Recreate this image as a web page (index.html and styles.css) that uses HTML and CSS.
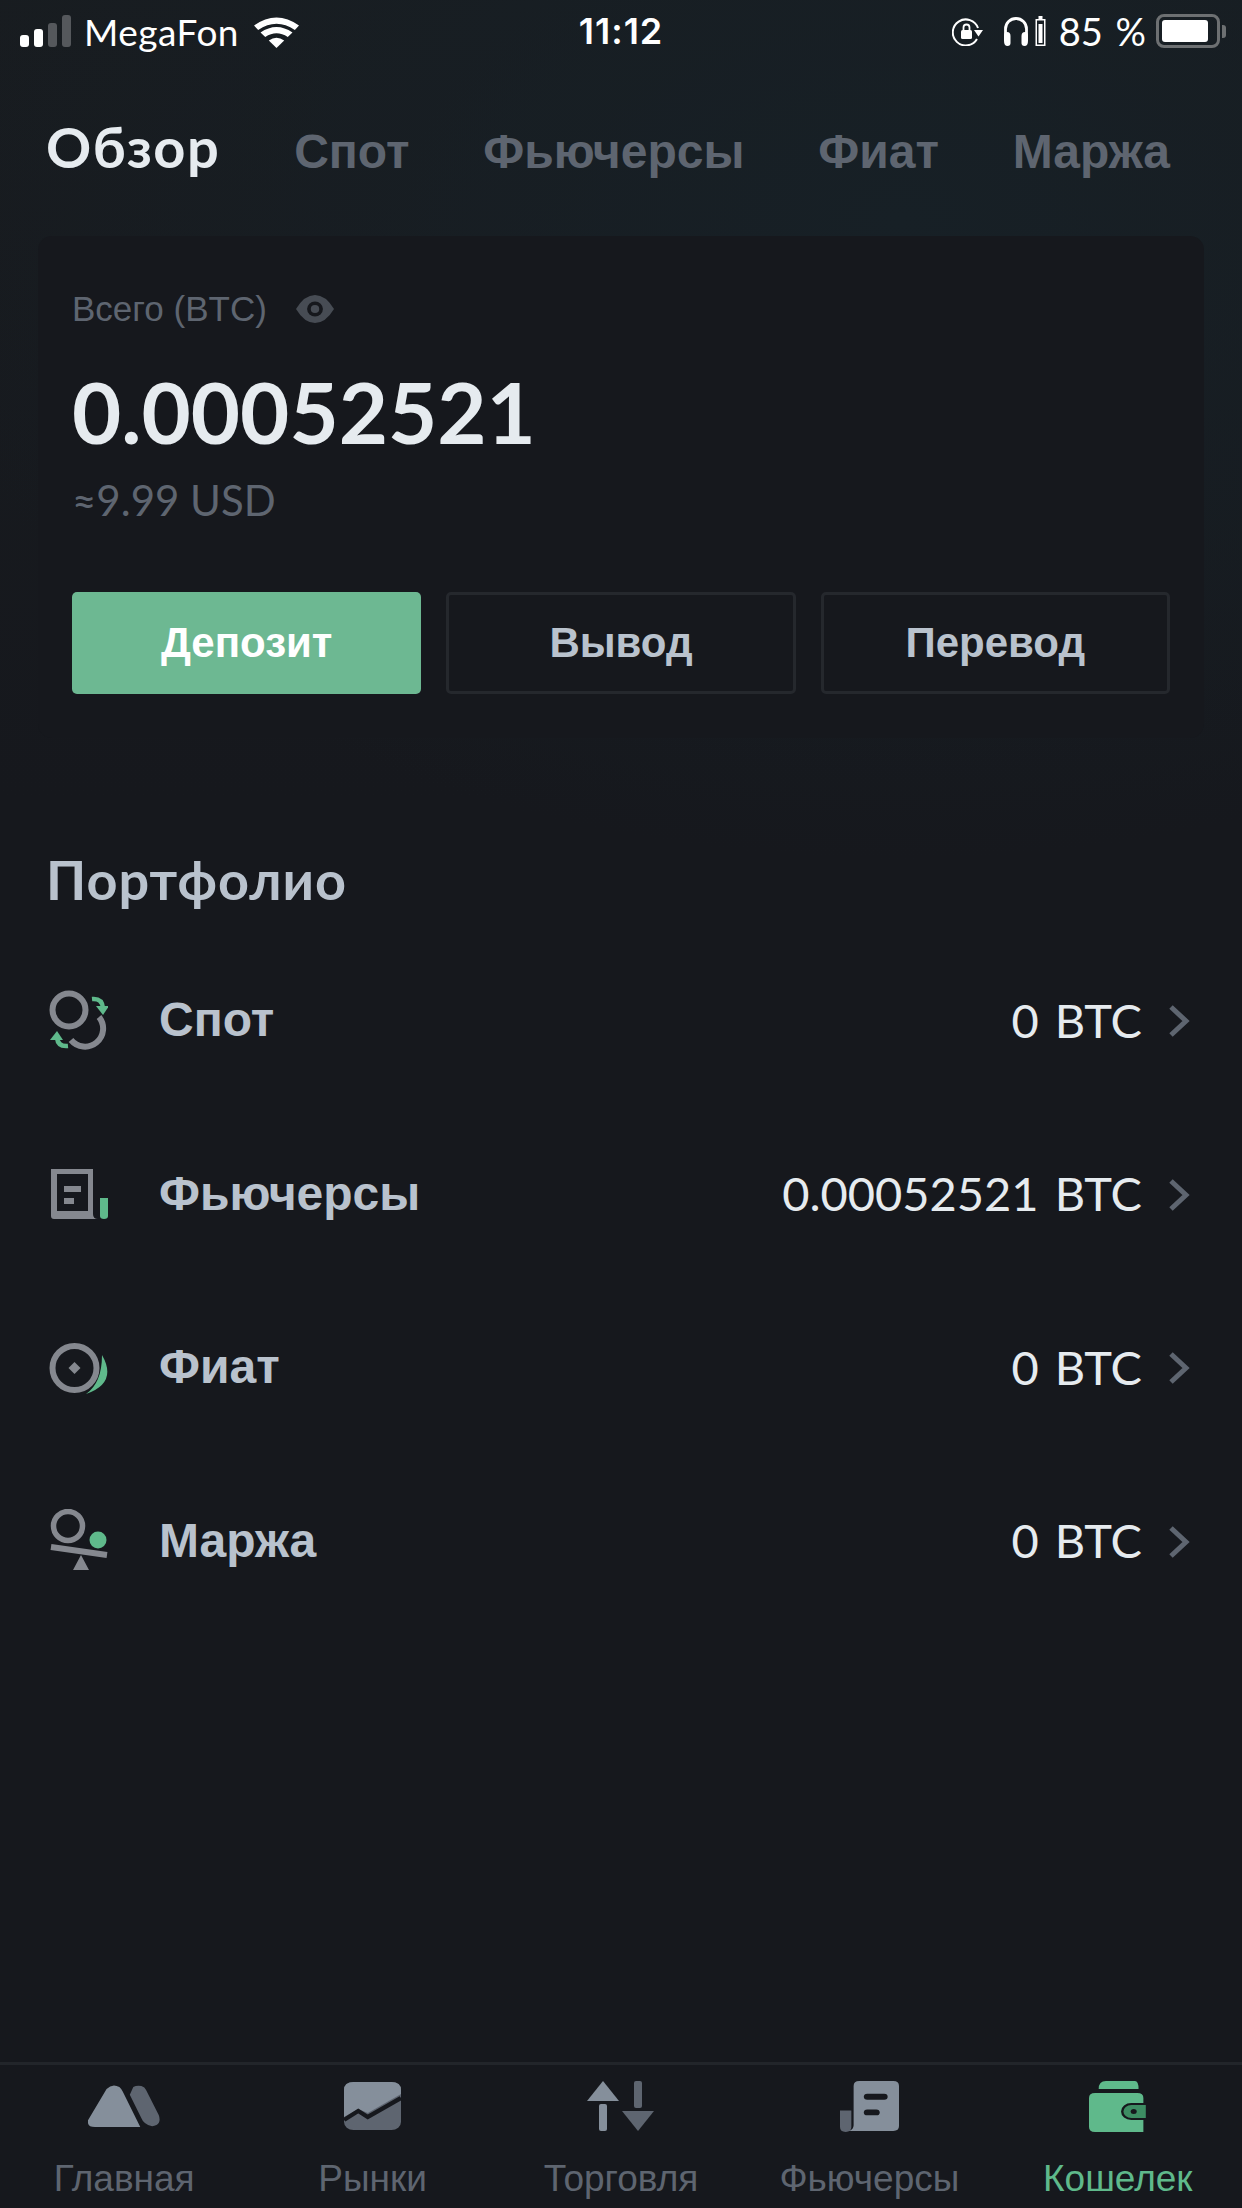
FILE: index.html
```html
<!DOCTYPE html>
<html lang="ru">
<head>
    <meta charset="UTF-8">
    <meta name="viewport" content="width=device-width, initial-scale=1.0">
    <title>Кошелек</title>
    <link rel="stylesheet" href="styles.css">
</head>
<body>
    <div class="status-bar">
        <div class="status-left">
            <div class="signal">
                <span class="bar bar-1"></span>
                <span class="bar bar-2"></span>
                <span class="bar bar-3 off"></span>
                <span class="bar bar-4 off"></span>
            </div>
            <span class="carrier">MegaFon</span>
            <svg class="wifi" width="45" height="33" viewBox="0 0 38 33" preserveAspectRatio="none">
                <path d="M19 33 L12.5 25.5 Q19 20 25.5 25.5 Z" fill="#fff"/>
                <path d="M9.5 22 L5.5 17.5 Q19 6.5 32.5 17.5 L28.5 22 Q19 14.5 9.5 22 Z" fill="#fff"/>
                <path d="M3.5 15 L0 10.5 Q19 -5.5 38 10.5 L34.5 15 Q19 2.5 3.500 15 Z" fill="#fff"/>
            </svg>
        </div>
        <div class="status-time">11:12</div>
        <div class="status-right">
            <svg class="rot-lock" width="31" height="29" viewBox="0 0 31 29">
                <path d="M25 22 A13 13 0 1 1 26 11" fill="none" stroke="#fff" stroke-width="2"/>
                <path d="M22 13 L31 13 L26.500 19.500 Z" fill="#fff"/>
                <rect x="9" y="13" width="11" height="9" rx="1.500" fill="#fff"/>
                <path d="M11.500 13 V10.500 A3 3 0 0 1 17.500 10.500 V13" fill="none" stroke="#fff" stroke-width="1.800"/>
            </svg>
            <svg class="headphones" width="28" height="30" viewBox="0 0 26 30">
                <path d="M2.500 20 V13 A10.500 10.500 0 0 1 23.500 13 V20" fill="none" stroke="#fff" stroke-width="2.800"/>
                <path d="M1 20 Q1 16 4 16 Q7.500 16 7.500 20 V27 Q7.500 30 4.500 30 Q1 30 1 25 Z" fill="#fff"/>
                <path d="M25 20 Q25 16 22 16 Q18.500 16 18.500 20 V27 Q18.500 30 21.500 30 Q25 30 25 25 Z" fill="#fff"/>
            </svg>
            <svg class="mini-battery" width="11" height="30" viewBox="0 0 10 30">
                <rect x="3" y="0" width="4" height="3" fill="#fff"/>
                <rect x="0.750" y="3.750" width="8.500" height="25.500" fill="none" stroke="#fff" stroke-width="1.500"/>
                <rect x="3" y="8" width="4" height="19" fill="#fff"/>
            </svg>
            <span class="percent">85 %</span>
            <div class="battery">
                <div class="battery-fill"></div>
            </div>
            <div class="battery-nub"></div>
        </div>
    </div>

    <div class="tabs">
        <span class="tab active">Обзор</span>
        <span class="tab">Спот</span>
        <span class="tab">Фьючерсы</span>
        <span class="tab">Фиат</span>
        <span class="tab">Маржа</span>
    </div>

    <div class="main">
        <div class="card">
            <div class="total-label">
                <span>Всего (BTC)</span>
                <svg width="38" height="28" viewBox="0 0 36 28" preserveAspectRatio="none">
                    <path d="M0 14 Q8 0 18 0 Q28 0 36 14 Q28 28 18 28 Q8 28 0 14 Z" fill="#474c54"/>
                    <circle cx="18" cy="14" r="7.500" fill="#16181d"/>
                    <circle cx="18" cy="14" r="4" fill="#474c54"/>
                </svg>
            </div>
            <div class="total-value">0.00052521</div>
            <div class="total-usd">≈9.99 USD</div>
            <div class="actions">
                <button class="btn primary">Депозит</button>
                <button class="btn">Вывод</button>
                <button class="btn">Перевод</button>
            </div>
        </div>

        <h2 class="section-title">Портфолио</h2>

        <div class="portfolio">
            <div class="row">
                <svg class="row-icon" width="60" height="64" viewBox="0 0 60 64">
                    <circle cx="21" cy="22" r="16.500" fill="none" stroke="#85888f" stroke-width="6"/>
                    <path d="M51 29 A16.500 16.500 0 1 1 23 52" fill="none" stroke="#85888f" stroke-width="6"/>
                    <path d="M44 11 Q54 10 55 20" fill="none" stroke="#5fb98b" stroke-width="4.500"/>
                    <path d="M48 18 H61 L55 27 Z" fill="#5fb98b"/>
                    <path d="M20 58 Q10 59 9 50" fill="none" stroke="#5fb98b" stroke-width="4.500"/>
                    <path d="M2 52 H15 L9 43 Z" fill="#5fb98b"/>
                </svg>
                <span class="row-label">Спот</span>
                <span class="row-value">0 BTC</span>
                <svg class="chevron" width="22" height="34" viewBox="0 0 22 34"><path d="M3 3 L18 17 L3 31" fill="none" stroke="#5e6570" stroke-width="5"/></svg>
            </div>
            <div class="row">
                <svg class="row-icon" width="60" height="60" viewBox="0 0 60 60">
                    <path d="M3 6 H45 V51 Q45 56 50 56 H6 Q3 56 3 53 Z M9 11 V48 H40 V11 Z" fill="#85888f" fill-rule="evenodd"/>
                    <rect x="16" y="23" width="17" height="6" fill="#85888f"/>
                    <rect x="16" y="35" width="10" height="6" fill="#85888f"/>
                    <path d="M52 35 H60 V53 Q60 56 56 56 Q52 56 52 53 Z" fill="#5fb98b"/>
                </svg>
                <span class="row-label">Фьючерсы</span>
                <span class="row-value">0.00052521 BTC</span>
                <svg class="chevron" width="22" height="34" viewBox="0 0 22 34"><path d="M3 3 L18 17 L3 31" fill="none" stroke="#5e6570" stroke-width="5"/></svg>
            </div>
            <div class="row">
                <svg class="row-icon" width="60" height="60" viewBox="0 0 60 60">
                    <circle cx="26.500" cy="31" r="22" fill="none" stroke="#85888f" stroke-width="6"/>
                    <path d="M26.500 25 L32.500 31 L26.500 37 L20.500 31 Z" fill="#85888f"/>
                    <path d="M54 18 Q70 46 38 57 Q54 46 54 18 Z" fill="#5fb98b"/>
                </svg>
                <span class="row-label">Фиат</span>
                <span class="row-value">0 BTC</span>
                <svg class="chevron" width="22" height="34" viewBox="0 0 22 34"><path d="M3 3 L18 17 L3 31" fill="none" stroke="#5e6570" stroke-width="5"/></svg>
            </div>
            <div class="row">
                <svg class="row-icon" width="60" height="62" viewBox="0 0 60 62">
                    <circle cx="20" cy="17" r="14.500" fill="none" stroke="#85888f" stroke-width="5.500"/>
                    <circle cx="50" cy="31" r="8.500" fill="#5fb98b"/>
                    <path d="M3 38 L59 46" fill="none" stroke="#85888f" stroke-width="6"/>
                    <path d="M33 46 L41 61 H25 Z" fill="#85888f"/>
                </svg>
                <span class="row-label">Маржа</span>
                <span class="row-value">0 BTC</span>
                <svg class="chevron" width="22" height="34" viewBox="0 0 22 34"><path d="M3 3 L18 17 L3 31" fill="none" stroke="#5e6570" stroke-width="5"/></svg>
            </div>
        </div>
    </div>

    <div class="tabbar">
        <div class="nav-item">
            <div class="nav-icon">
                <svg width="72" height="42" viewBox="0 0 62 43" preserveAspectRatio="none">
                    <path d="M39 2 Q42 0 46 1 Q49 2 50 5 L61 31 Q63 38 59 41 Q54 44 49 39 Q47 37 46 34 L36 10 Z" fill="#5e6570"/>
                    <path d="M16 4 Q21 -2 27 2 Q29 4 30 7 L45 43 H6 Q-1 43 0 36 Z" fill="#858f9b"/>
                </svg>
            </div>
            <span>Главная</span>
        </div>
        <div class="nav-item">
            <div class="nav-icon">
                <svg width="57" height="48" viewBox="0 0 48 48" preserveAspectRatio="none">
                    <rect x="0" y="0" width="48" height="48" rx="8" fill="#5e6570"/>
                    <path d="M8 0 H40 Q48 0 48 8 V12 L20 31 L12 27 L0 35 V8 Q0 0 8 0 Z" fill="#858f9b"/>
                    <path d="M0 38 L12 29 L20 35 L48 16" fill="none" stroke="#16181d" stroke-width="4"/>
                </svg>
            </div>
            <span>Рынки</span>
        </div>
        <div class="nav-item">
            <div class="nav-icon">
                <svg width="67" height="50" viewBox="0 0 67 50">
                    <path d="M16 0 L32 20 H0 Z" fill="#858f9b"/>
                    <rect x="12" y="23" width="8" height="27" rx="2" fill="#858f9b"/>
                    <path d="M51 50 L35 30 H67 Z" fill="#5e6570"/>
                    <rect x="47" y="0" width="8" height="27" rx="2" fill="#5e6570"/>
                </svg>
            </div>
            <span>Торговля</span>
        </div>
        <div class="nav-item">
            <div class="nav-icon">
                <svg width="59" height="51" viewBox="0 0 52 52" preserveAspectRatio="none">
                    <path d="M0 30 H10 V47 Q10 52 5 52 Q0 52 0 47 Z" fill="#5e6570"/>
                    <path d="M17 0 H47 Q52 0 52 5 V46 Q52 51 47 51 H8 Q12 49 12 45 V5 Q12 0 17 0 Z" fill="#858f9b"/>
                    <rect x="21" y="13" width="21" height="6" rx="3" fill="#16181d"/>
                    <rect x="21" y="29" width="14" height="6" rx="3" fill="#16181d"/>
                </svg>
            </div>
            <span>Фьючерсы</span>
        </div>
        <div class="nav-item active">
            <div class="nav-icon">
                <svg width="58" height="51" viewBox="0 0 48 51" preserveAspectRatio="none">
                    <path d="M8 8 Q8 0 14 0 H38 Q41 0 41 8 Z" fill="#5fb98b"/>
                    <path d="M5 12 H40 Q45 12 45 17 V51 H5 Q0 51 0 46 V17 Q0 12 5 12 Z" fill="#5fb98b"/>
                    <path d="M35 23 H48 V38 H35 A7.500 7.500 0 0 1 35 23 Z" fill="#3d8d63" stroke="#16181d" stroke-width="2"/>
                    <circle cx="37" cy="30.500" r="2.500" fill="#16181d"/>
                </svg>
            </div>
            <span>Кошелек</span>
        </div>
    </div>
</body>
</html>
```

FILE: styles.css
```css
* {
    box-sizing: border-box;
}

html,
body {
    margin: 0;
    height: 100%;
}

body {
    width: 1242px;
    height: 2208px;
    overflow: hidden;
    display: flex;
    flex-direction: column;
    font-family: "Liberation Sans", Arial, sans-serif;
    color: #fff;
    background:
        radial-gradient(1000px 640px at 900px 220px, #172026 0%, rgba(23, 32, 38, 0) 100%),
        linear-gradient(180deg, #181c20 0, #16181d 800px);
}

/* status bar */
.status-bar {
    height: 62px;
    display: grid;
    grid-template-columns: 1fr auto 1fr;
    align-items: center;
}

.status-left {
    display: flex;
    align-items: center;
    padding-left: 20px;
}

.signal {
    display: flex;
    align-items: flex-end;
    gap: 5px;
    height: 32px;
}

.bar {
    width: 9px;
    border-radius: 3px;
    background-color: #fff;
}

.bar.off {
    background-color: #55585c;
}

.bar-1 { height: 12px; }
.bar-2 { height: 18px; }
.bar-3 { height: 24px; }
.bar-4 { height: 32px; }

.carrier {
    margin-left: 13px;
    font-family: Lato, "Open Sans", sans-serif;
    font-size: 37px;
    letter-spacing: 0.5px;
}

.wifi {
    margin-left: 15px;
}

.status-time {
    font-family: Inter, "Liberation Sans", sans-serif;
    font-size: 36px;
    font-weight: 600;
    letter-spacing: 1px;
}

.status-right {
    display: flex;
    align-items: center;
    justify-content: flex-end;
    padding-right: 16px;
}

.headphones {
    margin-left: 19px;
}

.mini-battery {
    margin-left: 5px;
}

.percent {
    margin-left: 13px;
    font-family: Lato, "Open Sans", sans-serif;
    font-size: 38px;
    word-spacing: 3px;
}

.battery {
    width: 64px;
    height: 34px;
    margin-left: 10px;
    padding: 3px;
    border: 3px solid #6d7072;
    border-radius: 8px;
    flex-shrink: 0;
}

.battery-fill {
    width: 46px;
    height: 100%;
    border-radius: 3px;
    background-color: #fff;
}

.battery-nub {
    width: 4px;
    height: 13px;
    margin-left: 2px;
    border-radius: 0 3px 3px 0;
    background-color: #6d7072;
    flex-shrink: 0;
}

/* top tabs */
.tabs {
    display: flex;
    align-items: baseline;
    justify-content: space-between;
    padding: 51px 72px 0 46px;
    height: 174px;
}

.tab {
    font-size: 48px;
    font-weight: 700;
    color: #5e6570;
}

.tab.active {
    font-family: Lato, "Open Sans", sans-serif;
    font-size: 56px;
    font-weight: 700;
    color: #e6ebef;
    letter-spacing: 1.5px;
}

.main {
    flex: 1;
}

/* balance card */
.card {
    width: 1166px;
    height: 502px;
    margin-left: 38px;
    padding: 49px 34px 0;
    border-radius: 14px;
    background-color: #16181d;
}

.total-label {
    display: flex;
    align-items: center;
    gap: 29px;
    height: 48px;
    font-size: 35px;
    color: #5e6570;
}

.total-value {
    margin-top: 28px;
    font-family: Lato, "Open Sans", sans-serif;
    font-size: 85px;
    font-weight: 700;
    line-height: 100px;
    color: #e6ebef;
}

.total-usd {
    margin-top: 16px;
    font-family: Lato, "Open Sans", sans-serif;
    font-size: 42px;
    line-height: 46px;
    color: #5e6570;
}

.actions {
    display: grid;
    grid-template-columns: repeat(3, 1fr);
    gap: 25px;
    margin-top: 69px;
}

.btn {
    height: 102px;
    padding: 0;
    border: 3px solid #25282d;
    border-radius: 5px;
    background-color: transparent;
    font-family: inherit;
    font-size: 42px;
    font-weight: 700;
    color: #b9c2cd;
}

.btn.primary {
    border: none;
    background-color: #6db892;
    color: #fff;
}

/* portfolio */
.section-title {
    margin: 112px 0 0 46px;
    font-family: Lato, "Open Sans", sans-serif;
    font-size: 54px;
    font-weight: 700;
    line-height: 60px;
    color: #b9c2cd;
    letter-spacing: 1px;
}

.portfolio {
    margin-top: 23px;
    padding: 0 52px 0 48px;
}

.row {
    height: 173.5px;
    display: flex;
    align-items: center;
}

.row-icon {
    flex-shrink: 0;
}

.row-label {
    flex: 1;
    margin-left: 51px;
    font-size: 48px;
    font-weight: 700;
    color: #b9c2cd;
}

.row-value {
    font-family: Lato, "Open Sans", sans-serif;
    font-size: 47px;
    word-spacing: 4px;
    color: #e6ebef;
}

.chevron {
    margin: 3px 0 0 26px;
}

/* bottom nav */
.tabbar {
    height: 146px;
    display: grid;
    grid-template-columns: repeat(5, 1fr);
    border-top: 3px solid #22252a;
    padding-top: 15px;
}

.nav-item {
    display: flex;
    flex-direction: column;
    align-items: center;
    font-size: 37px;
    color: #5e6570;
}

.nav-icon {
    height: 52px;
    display: flex;
    align-items: center;
}

.nav-item span {
    margin-top: 26px;
}

.nav-item.active {
    color: #5fb98b;
}
```
